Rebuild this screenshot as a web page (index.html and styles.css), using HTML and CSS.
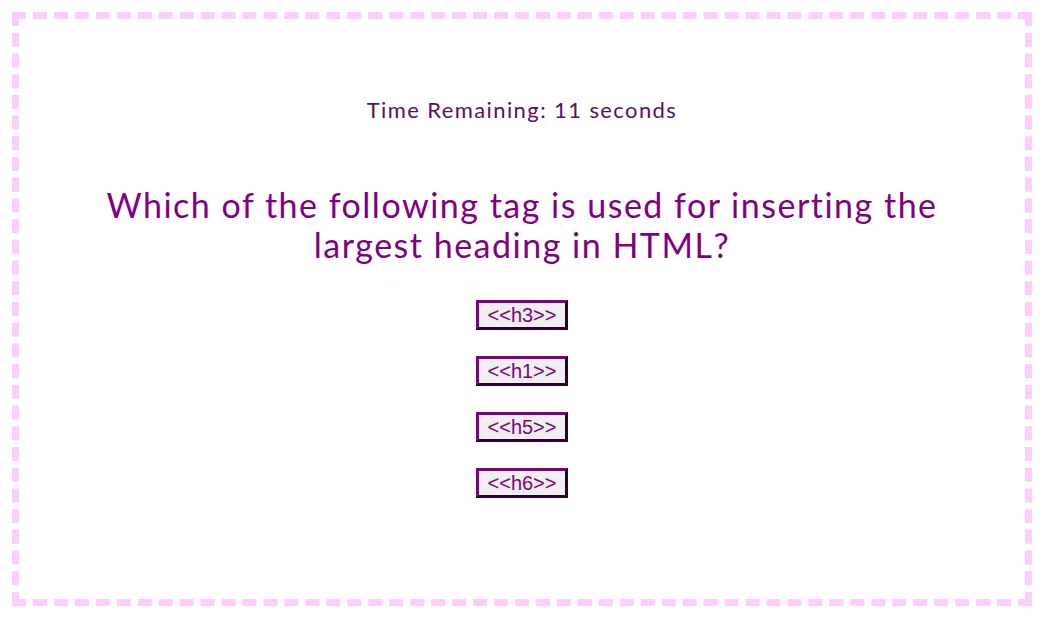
FILE: index.html
```html
<!DOCTYPE html>
<html>
<head>
<meta charset="utf-8">
<link rel="stylesheet" href="styles.css">
</head>
<body>
<div class="quiz">
  <p class="timer">Time Remaining: 11 seconds</p>
  <h1 class="question">Which of the following tag is used for inserting the largest heading in HTML?</h1>
  <div class="choices">
    <button class="choice">&lt;&lt;h3&gt;&gt;</button>
    <button class="choice">&lt;&lt;h1&gt;&gt;</button>
    <button class="choice">&lt;&lt;h5&gt;&gt;</button>
    <button class="choice">&lt;&lt;h6&gt;&gt;</button>
  </div>
</div>
</body>
</html>
```
FILE: styles.css
```css
html, body {
  margin: 0;
  padding: 0;
  background: #ffffff;
}
body {
  padding: 12px 13px 12px 12px;
  font-family: "Lato", "Open Sans", sans-serif;
}
.quiz {
  box-sizing: border-box;
  height: 594px;
  border: 7px dashed #fdcdfd;
  text-align: center;
}
.timer {
  margin: 78px 0 0;
  font-size: 22px;
  line-height: 26px;
  letter-spacing: 1.4px;
  color: #5a105a;
}
.question {
  margin: 62px auto 0;
  width: 900px;
  font-size: 34px;
  line-height: 40px;
  font-weight: 400;
  letter-spacing: 1.5px;
  color: #800080;
}
.choices {
  margin-top: 35px;
  display: flex;
  flex-direction: column;
  align-items: center;
  gap: 26px;
}
.choice {
  box-sizing: border-box;
  height: 30px;
  padding: 0 9px;
  border: 3px outset #800080;
  background: #efefef;
  color: #800080;
  font-family: "Liberation Sans", Arial, sans-serif;
  font-size: 20px;
  line-height: 22px;
}
```
